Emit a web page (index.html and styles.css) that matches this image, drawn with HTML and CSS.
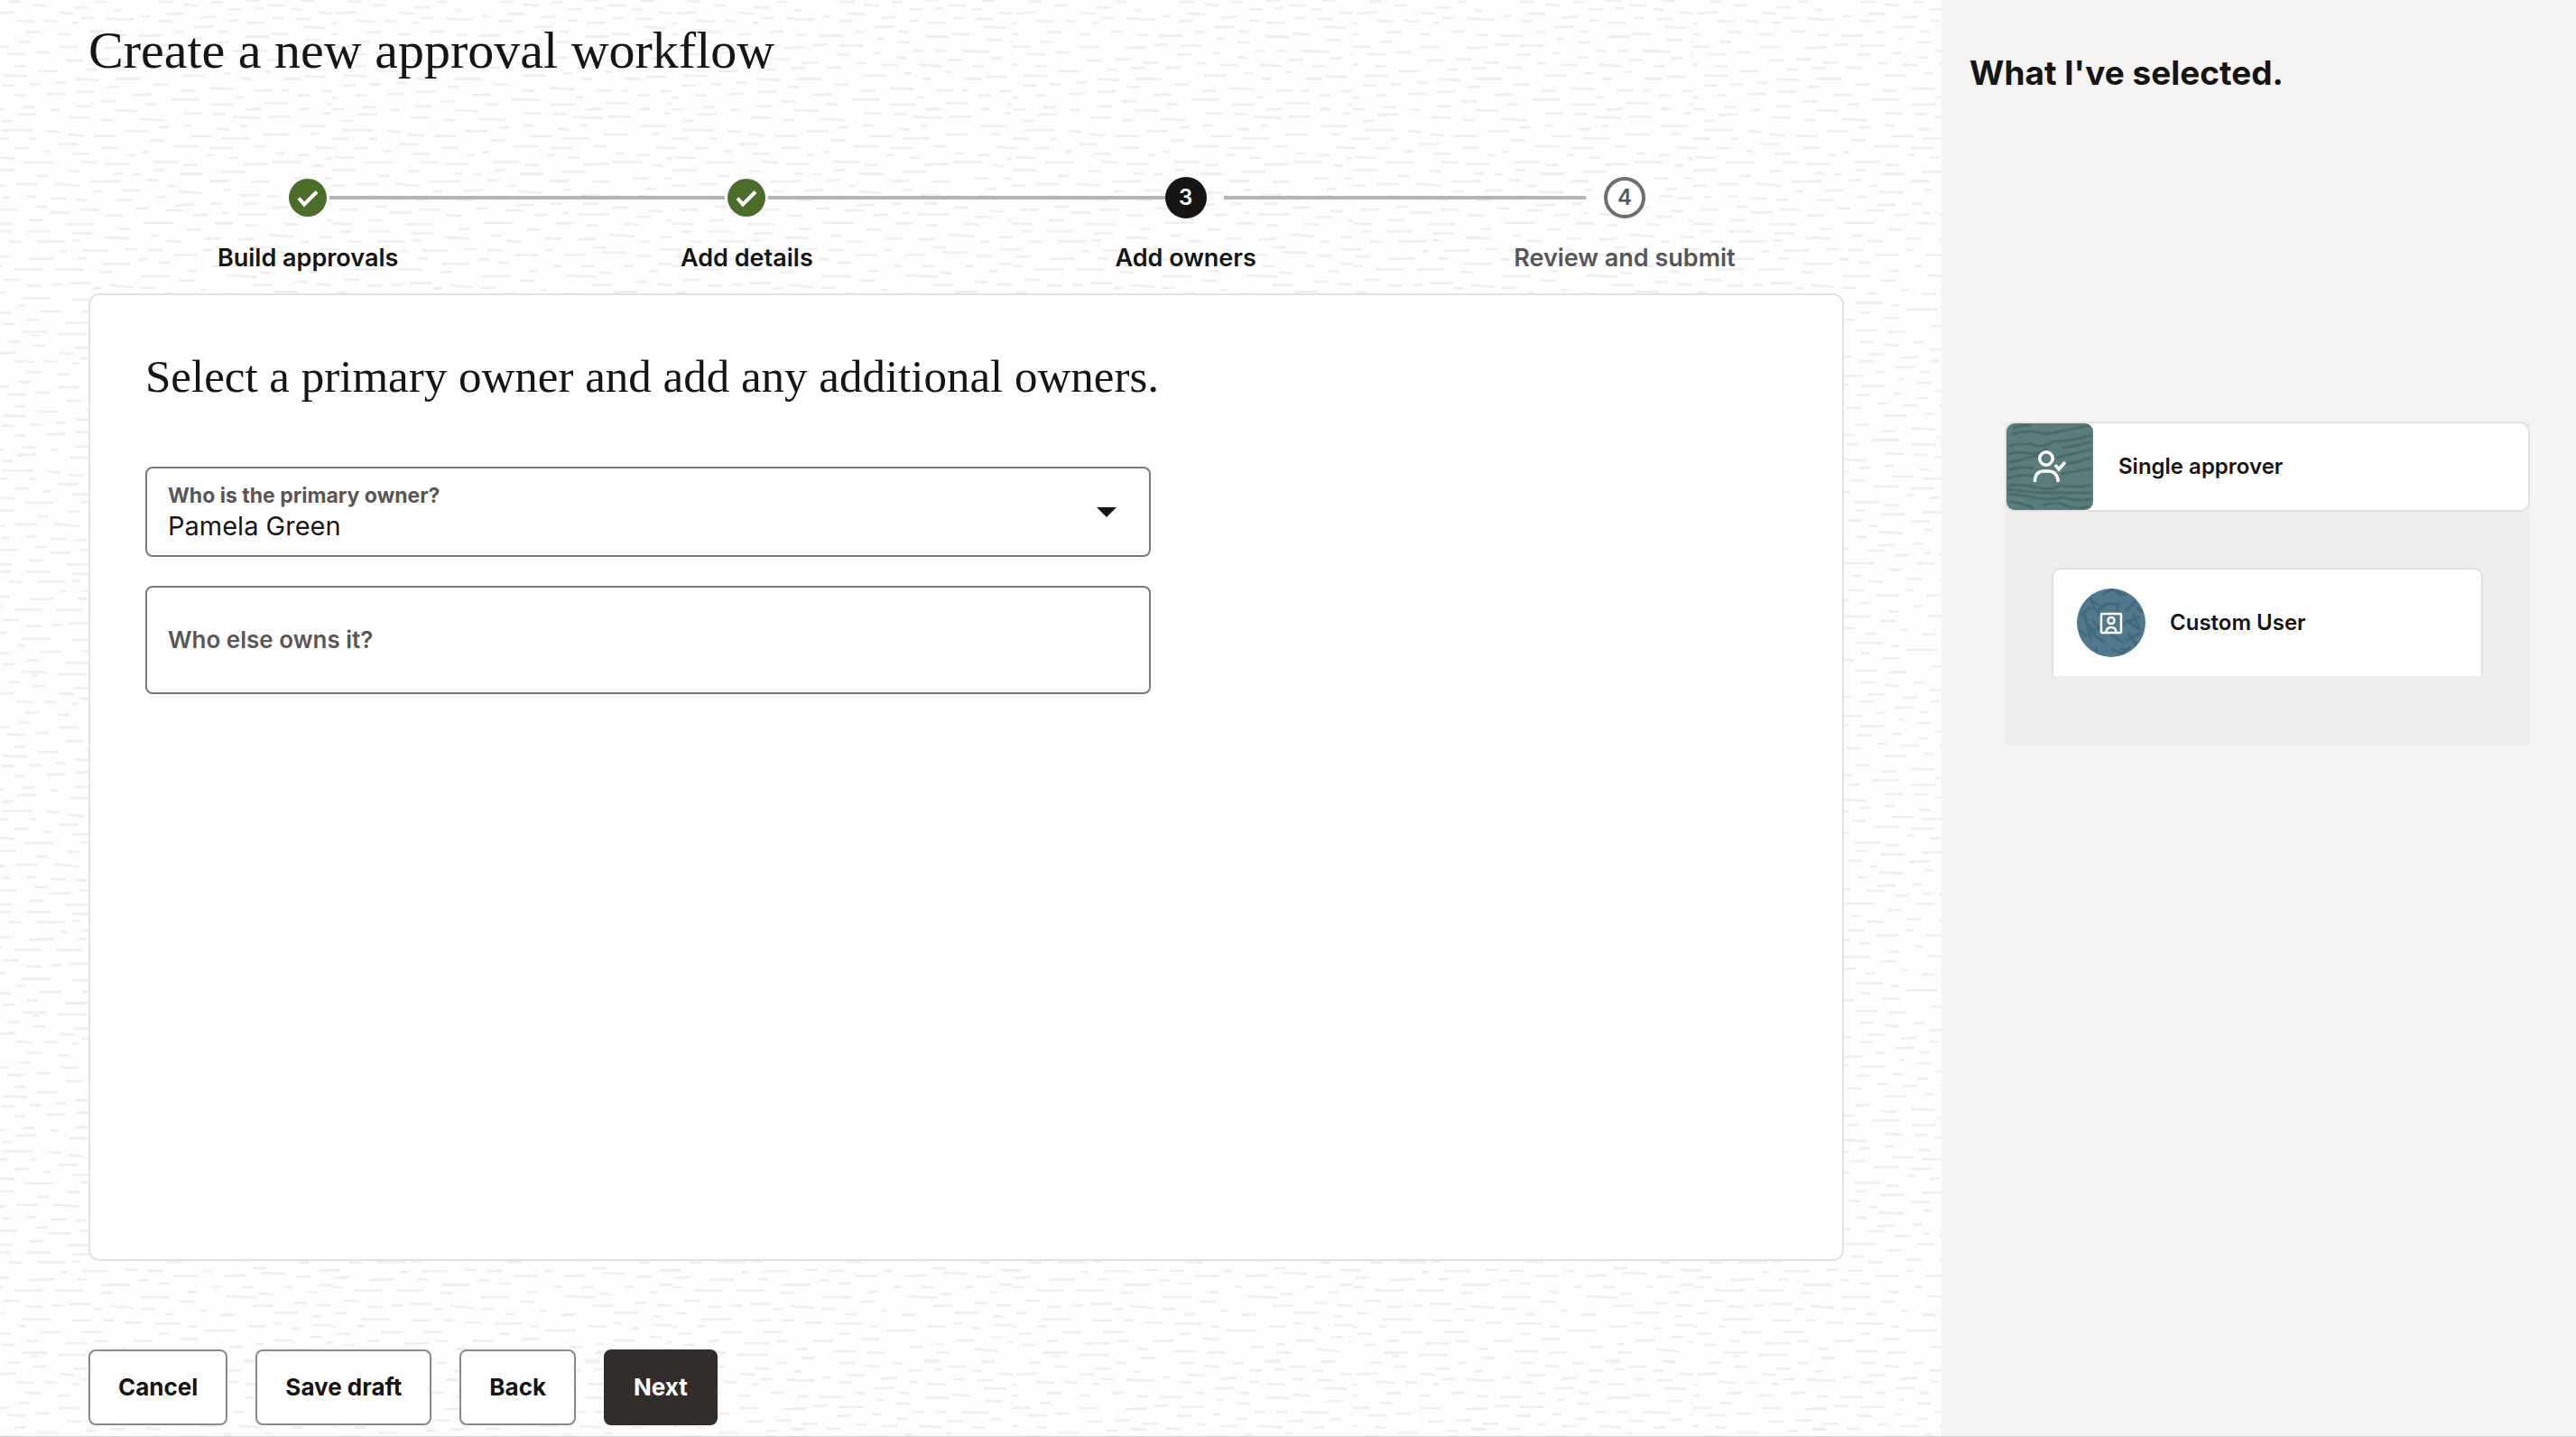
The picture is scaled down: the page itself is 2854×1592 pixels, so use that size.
FILE: index.html
```
<!DOCTYPE html>
<html lang="en">
<head>
<meta charset="utf-8">
<meta name="viewport" content="width=device-width, initial-scale=1">
<title>Create a new approval workflow</title>
<link rel="stylesheet" href="styles.css">
</head>
<body>
<div class="page">
  <main class="main">
    <h1 class="title">Create a new approval workflow</h1>

    <ol class="steps">
      <li class="step step-done">
        <div class="step-track">
          <span class="step-line step-line-none"></span>
          <span class="step-mark"><svg viewBox="0 0 42 42" aria-hidden="true"><path d="M11 21.500L17 28.500L31 14.500"/></svg></span>
          <span class="step-line"></span>
        </div>
        <span class="step-label">Build approvals</span>
      </li>
      <li class="step step-done">
        <div class="step-track">
          <span class="step-line"></span>
          <span class="step-mark"><svg viewBox="0 0 42 42" aria-hidden="true"><path d="M11 21.500L17 28.500L31 14.500"/></svg></span>
          <span class="step-line"></span>
        </div>
        <span class="step-label">Add details</span>
      </li>
      <li class="step step-current" aria-current="step">
        <div class="step-track">
          <span class="step-line"></span>
          <span class="step-mark">3</span>
          <span class="step-line"></span>
        </div>
        <span class="step-label">Add owners</span>
      </li>
      <li class="step step-next">
        <div class="step-track">
          <span class="step-line"></span>
          <span class="step-mark">4</span>
          <span class="step-line step-line-none"></span>
        </div>
        <span class="step-label">Review and submit</span>
      </li>
    </ol>

    <section class="card">
      <h2 class="card-title">Select a primary owner and add any additional owners.</h2>
      <form class="fields">
        <div class="field">
          <label class="field-label" for="primary-owner">Who is the primary owner?</label>
          <select class="field-select" id="primary-owner"><option>Pamela Green</option></select>
          <svg class="field-arrow" viewBox="0 0 22 11" aria-hidden="true"><path d="M0 0H22L11 11Z"/></svg>
        </div>
        <div class="field field-tall">
          <label class="field-label" for="other-owners">Who else owns it?</label>
          <input class="field-input" id="other-owners" type="text">
        </div>
      </form>
    </section>

    <div class="actions">
      <button class="button" type="button">Cancel</button>
      <button class="button" type="button">Save draft</button>
      <button class="button" type="button">Back</button>
      <button class="button button-primary" type="button">Next</button>
    </div>
  </main>

  <aside class="summary">
    <h2 class="summary-title">What I've selected.</h2>
    <div class="group">
      <div class="group-head">
        <svg class="tile" viewBox="0 0 96 96" aria-hidden="true">
          <rect width="96" height="96" rx="9" fill="#5a7c7a"/>
          <g class="grain">
            <path d="M7 5Q20 1 27 3M5 12Q22 7 34 10T58 9Q76 6 92 2M3 25Q18 21 31 24T52 20Q72 20 94 13M2 34Q12 31 24 33T45 28M62 27Q80 25 94 20M2 43Q14 42 25 38T38 39M55 38Q76 33 94 29M2 52Q16 47 30 50M60 46Q80 43 94 38M1 61Q16 56 30 58M60 56Q78 53 94 50M2 69Q18 67 34 71T60 69Q80 72 94 68M2 78Q20 80 36 83T62 82Q80 87 94 84M3 87Q18 88 30 94M40 91Q55 86 66 91T92 92M1 73Q30 77 52 77T94 77"/>
          </g>
          <g fill="none" stroke="#fff" stroke-width="3.500"><circle cx="44" cy="39" r="7.200"/><path d="M31.500 65V62Q33 53 41 53H47Q55 53 57 62V65M54 46L58 51L65 43"/></g>
        </svg>
        <span class="group-name">Single approver</span>
      </div>
      <div class="member">
        <svg class="avatar" viewBox="0 0 76 76" aria-hidden="true">
          <clipPath id="disc"><circle cx="38" cy="38" r="38"/></clipPath>
          <circle cx="38" cy="38" r="38" fill="#507990"/>
          <g class="grain" clip-path="url(#disc)">
            <path d="M28 7L39 0L50 9M44 2L55 8M15 10L20 23M18 15L28 20M24 24L33 17H49M45 17V29M54 25L65 14M4 29L15 21M8 27L16 57M12 48L29 43M20 22L27 31M48 41L70 31M62 27L70 47M54 35L68 44M14 40L20 52L31 60M36 49L51 60M54 58L71 49M57 49L66 63M22 65L20 74M38 67L50 72L60 64M48 66L56 70M3 46L10 53M66 20L73 27M17 35L26 46"/>
          </g>
          <g fill="none" stroke="#fff" stroke-width="2.500"><rect x="27" y="28" width="22" height="21" rx="1"/><circle cx="38" cy="35.500" r="3.600"/><path d="M32.500 48Q33 43 38 43T43.500 48"/></g>
        </svg>
        <span class="member-name">Custom User</span>
      </div>
    </div>
  </aside>
</div>
</body>
</html>
```
FILE: styles.css
```
* { box-sizing: border-box; }

body {
  margin: 0;
  font-family: Inter, "Liberation Sans", sans-serif;
  font-size: 26px;
  line-height: 32px;
  color: #161513;
}

.page {
  display: grid;
  grid-template-columns: minmax(0, 1fr) 703px;
  min-height: 100vh;
  border-bottom: 1px solid #d4d4d4;
}

/* Main column on a tile of short brushed strokes */
.main {
  display: flex;
  flex-direction: column;
  padding: 20px 108px 12px 98px;
  background-color: #fefefe;
  background-position: 126px 0;
  background-size: 377px 377px;
  background-image: url("data:image/svg+xml,%3Csvg xmlns='http://www.w3.org/2000/svg' viewBox='0 0 1131 1131'%3E%3Cpath fill='none' stroke='%23efefef' stroke-width='8' d='M150 6h49M232 14l48 5M325 7h36M435 1h48M512 18h58M622 2h44M780 5h40M862 18h42M1073 6h32M0 34h24M380 31h44M466 27h30M590 30l36 3M1000 25h48M176 46h58M288 59l52-4M682 41l42 4M738 45l68-5M950 42l50 4M93 54h27M0 64h67M149 70h44M381 69h32M442 76h60M528 60h36M605 63h54M725 78h16M806 69l60 3M900 69l42 3M1022 60h42M1104 62h27M991 76h22M265 91l66-3M630 89l74 4M202 106h30M348 104l32 3M838 106h50M1052 106l44-2M8 117h36M83 119l76-1M275 129h22M437 122h78M525 111l58 4M725 114h20M947 114h38M64 150l48-3M150 152h79M340 141h44M637 133h52M719 140h6M725 155h58M816 139h38M949 156h65M1099 159h32M0 158h40M140 182h48M259 177h28M398 169h36M470 169h38M558 169l90 3M776 179l60 2M869 174h48M719 178h6M26 208h52M207 210h32M341 191l34 1M511 199h50M652 194h36M974 201h52M1068 197h50M0 226h36M105 223l50 3M287 216h56M414 215l74 5M592 220h38M725 215h18M801 220h37M1119 226h12M230 251h74M365 244h26M502 239h22M637 254l68 2M763 250l80 3M878 237h66M1038 231h36M4 262h86M424 262h33M565 262h57M1004 262l78 5M132 281h48M760 284h44M852 280h36M938 274h35M0 289h16M1107 289h24M223 302h47M319 293l78 3M471 301h57M558 301h22M686 305l38-3M1006 305l63-1M63 316l62-2M611 317h42M803 317h34M909 313l58-2M190 331h92M404 323h26M725 325h22M0 337h6M1089 337h42M106 346h40M321 347h80M502 342l77 1M709 346h15M828 356h40M1003 353h52M1 366l80 3M437 365l54-4M616 363l35-2M725 363h42M919 365h30M234 377h58M330 379h42M695 377h24M808 382l66-3M86 395l84 5M396 388l95 5M513 388h74M985 390l66 1M1094 399h37M760 403l36-2M230 417h32M420 418h24M618 419h88M40 436h72M148 425l35-3M344 428l40 3M500 447h78M655 446h28M761 433h100M909 435l45 4M980 446l50 5M0 452h8M1066 452h65M120 466h48M254 453h71M358 460h92M725 461h56M852 461h22M0 491h14M196 486h85M318 492h77M465 486h42M670 489l66 4M801 493l47-1M948 479h63M1090 491h41M43 516h26M94 505h22M306 515h26M381 525l35-2M537 510h29M611 515h40M708 527h16M735 522l67 4M899 503h25M993 511h56M0 545h48M130 538h86M235 548h43M430 547l82-2M528 538h97M662 550h31M834 540h95M1021 537l56 4M1102 545h29M0 577h30M64 579h28M134 566h34M218 578h80M357 571h79M725 566h80M978 569h40M0 602h22M110 599h42M316 602h65M457 605l60-2M597 593h47M698 593h25M877 585h38M1053 603h78M32 634l62-2M178 618h28M213 637l80 4M363 631h27M638 629l35-2M725 617h44M806 612h73M934 610l84 8M1061 636h32M140 654h32M420 649h68M508 653h40M614 652h42M675 659h50M760 656h26M842 653h32M7 665h53M920 660h55M1003 664h40M72 693h45M170 699h60M205 683l62-3M323 677h34M360 708h22M430 677h46M527 691l54-2M648 701l46 2M725 693h4M753 697h57M868 687h42M1016 697h66M0 717h28M1104 716h27M266 716l46-3M411 712h102M604 721h52M708 733h16M847 733l50-2M917 706h71M98 741h101M337 742h59M565 744l49 3M725 742l69 3M974 745h91M16 761h38M242 763h46M440 749h36M755 769h34M842 769h80M994 776h66M122 783h33M0 789l50 4M303 793h53M413 797l56-4M514 780l86 6M685 788h40M1101 790h30M174 801l51 2M618 803h31M782 802l43 2M876 802h94M992 799h28M36 828h41M112 831h52M299 831h27M460 822h45M684 829h70M955 835h22M1027 832h85M201 848h77M368 848l71-2M492 838l81 2M606 850h50M735 854l50-2M849 861l83-2M1010 859h32M0 877h55M82 862h33M148 873h39M331 884h26M425 885h40M568 884h27M682 877h43M725 885h35M1092 877h39M800 895h94M939 896h90M246 901h32M483 905l41 4M646 902h32M1084 904h43M90 918h97M372 915l103 5M217 933h52M599 937h42M764 930h54M0 949l65 5M90 957h47M286 963h23M460 947h68M673 944l50 3M841 950h50M925 946h34M983 941h72M1062 958h31M1117 948h14M168 975h34M532 970h80M737 972h36M356 977h46M661 982h29M824 992h97M991 996h63M1096 995h35M36 1003h55M135 1006h90M529 1005h29M252 1016h27M445 1015h60M592 1022h24M664 1011h61M725 1017h15M810 1015h26M303 1029h102M887 1035h69M1027 1034h67M152 1040h32M742 1040h45M652 1050h40M224 1057h58M63 1063h66M535 1062h65M842 1063h38M1071 1064h40M472 1074h28M709 1069h16M761 1077h40M967 1072h80M8 1090h35M385 1084h42M131 1098h78M602 1091l76 7M243 1103h61M472 1103h48M828 1103h80M943 1110h99M857 1114h24M22 1121h45M431 1130h54M620 1131h47'/%3E%3C/svg%3E");
}

.title {
  margin: 0;
  font-family: "Liberation Serif", serif;
  font-size: 58px;
  line-height: 72px;
  font-weight: 400;
}

/* Progress steps */
.steps {
  display: grid;
  grid-template-columns: repeat(4, 1fr);
  margin: 104px 0 23px;
  padding: 0;
  list-style: none;
}

.step { font-size: 27px; font-weight: 600; text-align: center; }

.step-track {
  display: grid;
  grid-template-columns: 1fr auto 1fr;
  align-items: center;
  gap: 3px;
  height: 46px;
}

.step-line { height: 4px; background: #b4b4b4; }
.step-line-none { background: none; }

.step-mark {
  display: flex;
  align-items: center;
  justify-content: center;
  width: 46px;
  height: 46px;
  border-radius: 50%;
  font-size: 24px;
}

.step-mark svg { width: 42px; fill: none; stroke: #fff; stroke-width: 4; }
.step-label { display: block; margin-top: 28px; }
.step-done .step-mark { width: 42px; height: 42px; background: #4c6c29; }
.step-current .step-track { gap: 0; }
.step-current .step-mark { background: #161513; color: #fff; }
.step-current .step-line:last-child { margin-left: 19px; }
.step-next .step-track { gap: 20px; }
.step-next .step-mark { border: 4px solid #6f6e6d; background: #fff; }
.step-next { color: #585756; }

.card {
  flex: 1;
  padding: 56px 61px;
  border: 2px solid #e2e2e2;
  border-radius: 12px;
  background: #fff;
}

.card-title {
  margin: 0;
  font-family: "Liberation Serif", serif;
  font-size: 51px;
  line-height: 68px;
  font-weight: 400;
}

.fields { display: grid; gap: 32px; max-width: 1114px; margin-top: 66px; }

/* Label, control and arrow share one grid cell */
.field { display: grid; color: #585756; }
.field > * { grid-area: 1 / 1; }

.field-label {
  z-index: 1;
  align-self: start;
  justify-self: start;
  margin: 16px 25px;
  font-size: 23px;
  font-weight: 700;
  pointer-events: none;
}

.field-select,
.field-input {
  width: 100%;
  height: 100px;
  padding: 32px 23px 0;
  border: 2px solid #7b7a79;
  border-radius: 8px;
  background: #fff;
  color: #161513;
  font: inherit;
  font-size: 29px;
  appearance: none;
}

.field-arrow { width: 22px; align-self: center; justify-self: end; margin-right: 38px; fill: #161513; }
.field-tall .field-label { align-self: center; font-size: 26px; font-weight: 600; }
.field-tall .field-input { height: 120px; }

.actions { display: flex; gap: 31px; margin-top: 98px; }

.button {
  height: 84px;
  padding: 0 31px;
  border: 2px solid #8b8a89;
  border-radius: 8px;
  background: #fff;
  color: #161513;
  font: inherit;
  font-weight: 700;
}

.button-primary { border-color: #312d2a; background: #312d2a; color: #fff; }

/* Selection summary */
.summary { padding: 57px 51px 56px 31px; background: #f5f4f2; }

.summary-title { margin: 0; font-size: 37px; line-height: 48px; font-weight: 700; }

.group {
  margin: 362px 0 0 39px;
  padding-bottom: 77px;
  background: #efeeec;
  font-size: 24px;
  font-weight: 600;
}

.group-head {
  display: flex;
  align-items: center;
  gap: 28px;
  border: 2px solid #e4e3e1;
  border-radius: 11px;
  background: #fff;
}

.tile { width: 96px; height: 96px; }
.grain { fill: none; stroke: #243f46; stroke-width: 3; stroke-opacity: .28; }

.member {
  display: flex;
  align-items: center;
  gap: 27px;
  height: 120px;
  margin: 62px 52px 0;
  padding: 0 26px;
  border: 2px solid #e2e1df;
  border-bottom: 0;
  border-radius: 10px 10px 4px 4px;
  background: #fff;
}

.avatar { width: 76px; height: 76px; }
```
